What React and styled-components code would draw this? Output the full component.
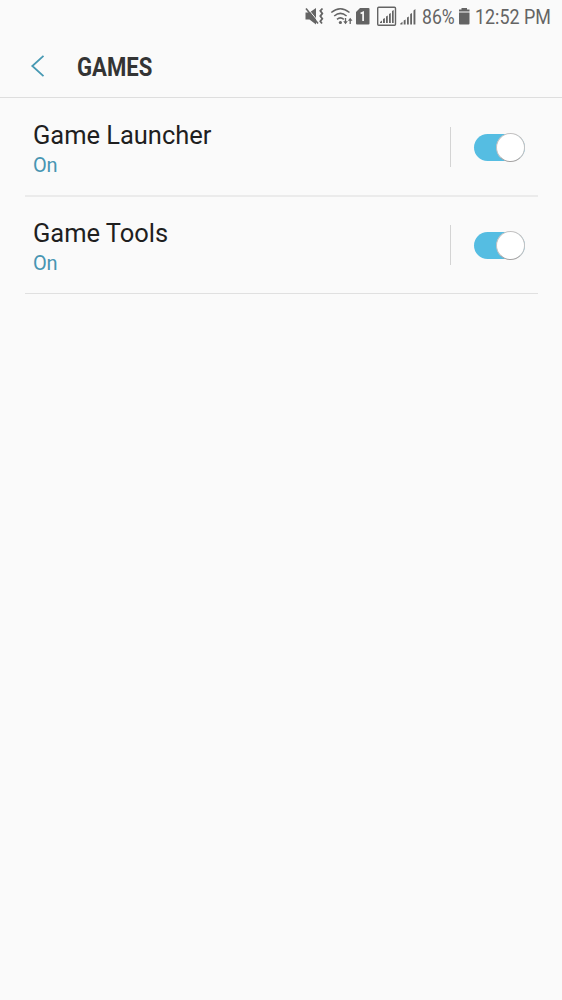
import React from 'react';
import styled, { createGlobalStyle } from 'styled-components';

const GlobalStyle = createGlobalStyle`
  * { box-sizing: border-box; }
  body { margin: 0; background: #fafafa; font-family: Roboto, sans-serif; }
`;

const Screen = styled.main`
  width: 562px;
  height: 1000px;
  background: #fafafa;
  overflow: hidden;
`;

const StatusBar = styled.div`
  display: flex;
  height: 34px;
  padding-left: 304px;
  color: #646464;
`;

const StatusIcons = styled.svg`
  flex: none;
  width: 118px;
  height: 34px;
`;

const Condensed = styled.span`
  flex: none;
  display: block;
  width: ${({ $width }) => $width}px;
  white-space: nowrap;
  transform: scaleX(${({ $scale }) => $scale});
  transform-origin: left center;
`;

const StatusText = styled(Condensed)`
  font-size: 20px;
  line-height: 34px;
`;

const Battery = styled.svg`
  flex: none;
  width: 17px;
  height: 34px;
`;

const TitleBar = styled.header`
  display: flex;
  align-items: center;
  height: 64px;
  padding: 3px 0 0 30px;
  border-bottom: 1px solid #dedede;
`;

const BackButton = styled.button`
  width: 47px;
  height: 26px;
  padding: 0;
  border: 0;
  background: none;
  svg { display: block; }
`;

const Title = styled(Condensed)`
  margin: 0;
  font-size: 26px;
  font-weight: 700;
  line-height: 34px;
  color: #343434;
`;

const List = styled.div`
  padding: 0 24px 0 25px;
`;

const Row = styled.section`
  display: flex;
  height: 98px;
  padding: 0 13px 0 8px;
  border-bottom: 1px solid #e0e0e0;

  &:first-child {
    border-bottom-color: #ebebeb;
    box-shadow: 0 1px #ebebeb;
  }
`;

const Labels = styled.div`
  flex: 1;
  padding-top: 20px;
`;

const Name = styled.div`
  font-size: 25.5px;
  line-height: 35px;
  letter-spacing: -0.03px;
  color: #1f1f1f;
`;

const Status = styled.div`
  font-size: 20px;
  line-height: 25px;
  letter-spacing: -0.3px;
  color: #4795b2;
`;

const Separator = styled.div`
  width: 1px;
  height: 40px;
  margin: 29px 23px 0 0;
  background: #d4d4d4;
`;

const Toggle = styled.div`
  display: flex;
  justify-content: flex-end;
  align-items: center;
  width: 51px;
  height: 27px;
  margin-top: 36px;
  border-radius: 14px;
  background: #55bde2;
`;

const Knob = styled.div`
  flex: none;
  width: 29px;
  height: 29px;
  border-radius: 50%;
  border: 1px solid #c3c1c1;
  border-bottom-color: #a5a3a3;
  background: #fff;
`;

const items = ['Game Launcher', 'Game Tools'];

export default function App() {
  return (
    <Screen>
      <GlobalStyle />
      <StatusBar>
        <StatusIcons viewBox="304 0 118 34" fill="currentColor">
          <path d="M305.500 12.500h4l6.500-4.500v16.500l-6.500-5h-4z" />
          <path d="M307 7.500l12 15" stroke="#fafafa" strokeWidth="1" />
          <path d="M306 8.500l12 15" stroke="currentColor" strokeWidth="1.600" />
          <path d="M322.500 8.500l-2.200 2.400 2 2.600-2 2.600 2 2.600-2 2.600 1.700 2.200" fill="none" stroke="currentColor" strokeWidth="1.800" />
          <g fill="none" stroke="currentColor" strokeWidth="1.500">
            <path d="M331.300 12.500q9-7.600 18.200 0M334.200 16q6.200-5.200 12.400 0M337 19.400q3.400-3 6.800 0" />
          </g>
          <circle cx="340.400" cy="22.500" r="1.600" />
          <path d="M345.500 18v4M350.200 24v-4" stroke="currentColor" strokeWidth="1.300" />
          <path d="M343.200 21.300h4.600l-2.300 3zM347.900 20.800h4.600l-2.300-3z" />
          <path d="M356 12l4-4h8.500q1 0 1 1v14.500q0 1-1 1H357q-1 0-1-1z" />
          <path d="M360.600 13.500l2.500-1.200V21" fill="none" stroke="#fafafa" strokeWidth="1.700" />
          <rect x="377.700" y="7.200" width="17.800" height="18" rx="1" fill="none" stroke="currentColor" strokeWidth="1.400" />
          <path d="M380 23v-1l2-1.500V23zM383 23v-4l1.900-1v5zM386 23v-6.500l1.800-1V23zM389 23v-9l1.800-1v10zM392 23V11l1.700-1v13z" />
          <path d="M400.300 24.500v-1l2.200-1.700v2.700zM403.700 24.500v-4l1.900-1v5zM407 24.500v-7l1.800-1v8zM410.200 24.500V14l1.800-1v11.500zM413.500 24.500v-14l1.900-1.500v15.500z" />
        </StatusIcons>
        <StatusText $width={36} $scale={0.88}>86%</StatusText>
        <Battery viewBox="458 0 17 34" fill="currentColor">
          <path d="M461.500 8h5.500v1.500h2.500v2h-10.500v-2h2.500zM459 12.500h10.500v11q0 1-1 1h-8.500q-1 0-1-1z" />
        </Battery>
        <StatusText $width={78} $scale={0.895}>12:52 PM</StatusText>
      </StatusBar>
      <TitleBar>
        <BackButton aria-label="Back">
          <svg width="16" height="26" viewBox="30 54 16 26" fill="none" stroke="#4799b3" strokeWidth="1.800">
            <path d="M43.500 55.800L32.300 66l11.200 10.200" />
          </svg>
        </BackButton>
        <Title as="h1" $width={80} $scale={0.85}>GAMES</Title>
      </TitleBar>
      <List>
        {items.map((name) => (
          <Row key={name}>
            <Labels>
              <Name>{name}</Name>
              <Status>On</Status>
            </Labels>
            <Separator />
            <Toggle role="switch" aria-checked="true" aria-label={name}><Knob /></Toggle>
          </Row>
        ))}
      </List>
    </Screen>
  );
}
